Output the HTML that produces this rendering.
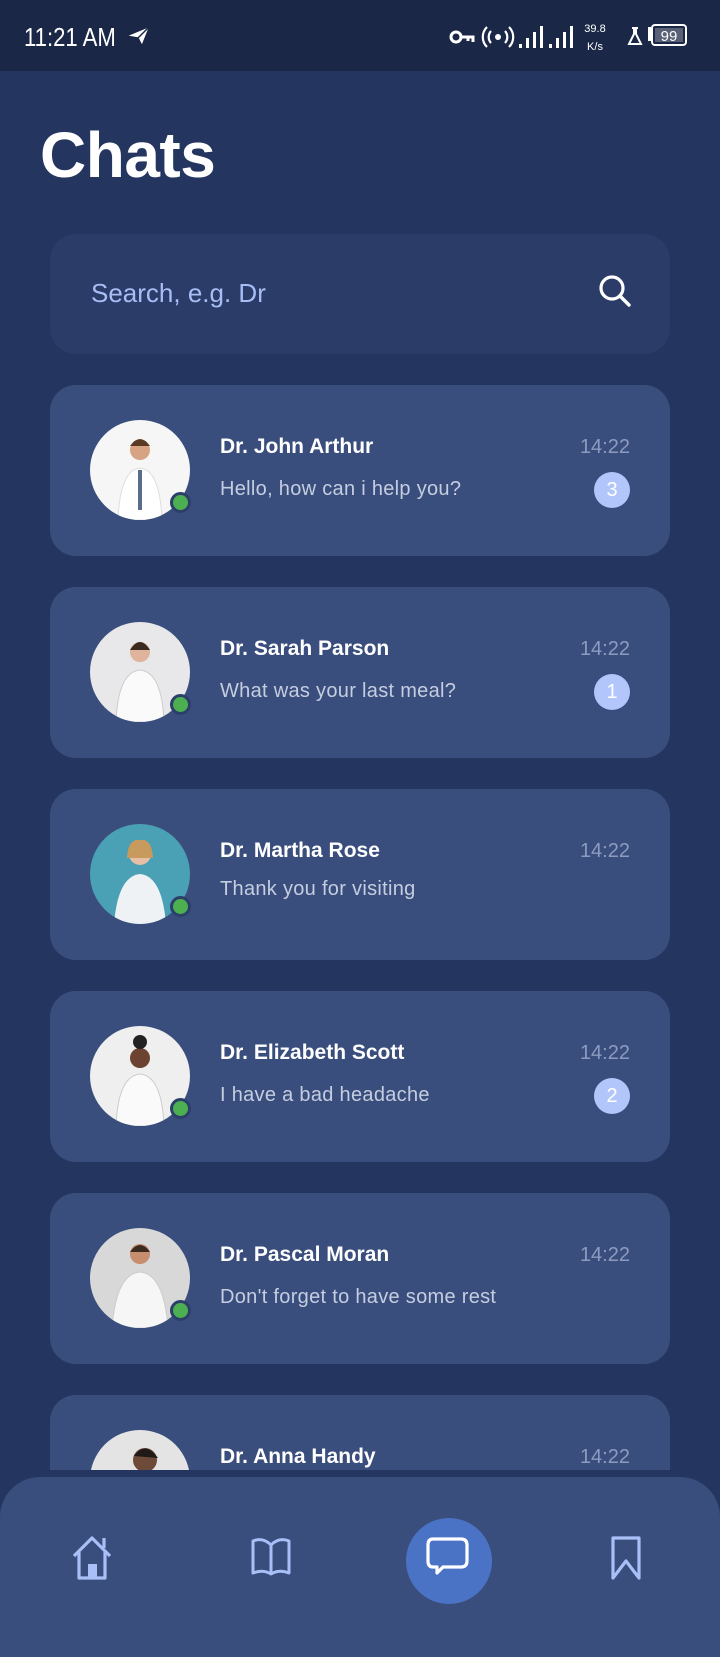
<!DOCTYPE html>
<html><head><meta charset="utf-8"><style>
*{margin:0;padding:0;box-sizing:border-box}
body{width:720px;height:1640px;background:#243660;font-family:"Liberation Sans",sans-serif;position:relative;overflow:hidden}
.sb{position:absolute;left:0;top:0;width:720px;height:71px;background:#1b2747;color:#fff}
.title{position:absolute;left:40px;top:118px;font-size:64px;font-weight:bold;color:#fff;letter-spacing:-0.5px}
.search{position:absolute;left:50px;top:234px;width:620px;height:120px;background:#2b3c68;border-radius:26px}
.search span{position:absolute;left:41px;top:44px;font-size:26px;color:#a8bdf5}
.card{position:absolute;left:50px;width:620px;height:171px;background:#3a4e7d;border-radius:26px;overflow:hidden}
.av{position:absolute;left:40px;top:35px;width:100px;height:100px;border-radius:50%;overflow:hidden;background:#ececec}
.dot{position:absolute;left:120px;top:107px;width:21px;height:21px;border-radius:50%;background:#4caf50;border:3px solid #2c3f6a}
.name{position:absolute;left:170px;top:50px;font-size:21px;font-weight:bold;color:#fff}
.msg{position:absolute;left:170px;top:93px;font-size:20px;color:#c5cde0;letter-spacing:.3px}
.time{position:absolute;right:40px;top:51px;font-size:20px;color:#8d9bc0}
.badge{position:absolute;right:40px;top:87px;width:36px;height:36px;border-radius:50%;background:#b3c6fb;color:#fff;font-size:20px;text-align:center;line-height:36px}
.nav{position:absolute;left:0;top:1477px;width:720px;height:180px;background:#3a4e7d;border-radius:40px 40px 0 0}
</style></head><body>
<div class="sb">
<div style="position:absolute;left:24px;top:22px;font-size:26px;transform:scaleX(.85);transform-origin:left">11:21 AM</div>
<svg style="position:absolute;left:124px;top:24px" width="28" height="24" viewBox="0 0 28 24"><path d="M2 12 L26 2 L18 22 L14 14 Z M14 14 L26 2" fill="#fff" stroke="#1b2747" stroke-width="1.5"/></svg>
<svg style="position:absolute;left:448px;top:22px" width="240" height="34" viewBox="0 0 240 34">
<circle cx="8" cy="15" r="5" fill="none" stroke="#fff" stroke-width="3"/><path d="M13 15h12v5M20 15v4" stroke="#fff" stroke-width="3" fill="none"/>
<circle cx="50" cy="15" r="3" fill="#fff"/><path d="M43 9a9 9 0 0 0 0 12M57 9a9 9 0 0 1 0 12M39 5a14 14 0 0 0 0 20M61 5a14 14 0 0 1 0 20" stroke="#fff" stroke-width="2.2" fill="none"/>
<rect x="71" y="22" width="3" height="4" fill="#fff"/><rect x="78" y="16" width="3" height="10" fill="#fff"/><rect x="85" y="10" width="3" height="16" fill="#fff"/><rect x="92" y="4" width="3" height="22" fill="#fff"/>
<rect x="101" y="22" width="3" height="4" fill="#fff"/><rect x="108" y="16" width="3" height="10" fill="#fff"/><rect x="115" y="10" width="3" height="16" fill="#fff"/><rect x="122" y="4" width="3" height="22" fill="#fff"/>
<text x="147" y="10" font-size="11" fill="#fff" text-anchor="middle" font-family="Liberation Sans">39.8</text><text x="147" y="28" font-size="11" fill="#fff" text-anchor="middle" font-family="Liberation Sans">K/s</text>
<path d="M184 6h6M186 6v6l-5 10h12l-5-10V6" stroke="#fff" stroke-width="2" fill="none"/>
<rect x="200" y="5" width="3" height="14" fill="#fff"/><rect x="204" y="3" width="34" height="20" rx="3" fill="none" stroke="#fff" stroke-width="2"/><rect x="207" y="6" width="28" height="14" fill="#5a6075"/>
<text x="221" y="19" font-size="15" fill="#fff" text-anchor="middle" font-family="Liberation Sans">99</text></svg>
</div>
<div class="title">Chats</div>
<div class="search"><span>Search, e.g. Dr</span>
<svg style="position:absolute;left:546px;top:38px" width="40" height="40" viewBox="0 0 40 40"><circle cx="16" cy="16" r="11" fill="none" stroke="#fff" stroke-width="3.2"/><path d="M24 24l9 9" stroke="#fff" stroke-width="3.4" stroke-linecap="round"/></svg></div>

<div class="card" style="top:385px"><div class="av" style="background:#f6f6f6"><svg width="100" height="100"><path d="M28 100 Q30 50 50 48 Q70 50 72 100Z" fill="#fff" stroke="#ddd"/><path d="M48 50h4v40h-4z" fill="#5a6c8c"/><circle cx="50" cy="30" r="10" fill="#d7a483"/><path d="M40 26 Q50 12 60 26" fill="#5a3a22"/></svg></div><div class="dot"></div><div class="name">Dr. John Arthur</div><div class="msg">Hello, how can i help you?</div><div class="time">14:22</div><div class="badge">3</div></div>

<div class="card" style="top:587px"><div class="av" style="background:#e8e8ea"><svg width="100" height="100"><path d="M26 100 Q28 50 50 48 Q72 50 74 100Z" fill="#fafafa" stroke="#ccc"/><circle cx="50" cy="30" r="10" fill="#e0b49a"/><path d="M40 28 Q50 12 60 28" fill="#3b2a20"/></svg></div><div class="dot"></div><div class="name">Dr. Sarah Parson</div><div class="msg">What was your last meal?</div><div class="time">14:22</div><div class="badge">1</div></div>

<div class="card" style="top:789px"><div class="av" style="background:#4aa0b4"><svg width="100" height="100"><path d="M24 100 Q28 52 50 50 Q72 52 76 100Z" fill="#eef2f5"/><circle cx="50" cy="30" r="11" fill="#e6bfa5"/><path d="M37 34 Q38 14 50 16 Q62 14 63 34" fill="#c79a5e"/></svg></div><div class="dot"></div><div class="name">Dr. Martha Rose</div><div class="msg" style="top:89px">Thank you for visiting</div><div class="time">14:22</div></div>

<div class="card" style="top:991px"><div class="av" style="background:#efefef"><svg width="100" height="100"><path d="M26 100 Q28 50 50 48 Q72 50 74 100Z" fill="#fafafa" stroke="#ccc"/><circle cx="50" cy="32" r="10" fill="#6b4330"/><circle cx="50" cy="16" r="7" fill="#222"/></svg></div><div class="dot"></div><div class="name">Dr. Elizabeth Scott</div><div class="msg">I have a bad headache</div><div class="time">14:22</div><div class="badge">2</div></div>

<div class="card" style="top:1193px"><div class="av" style="background:#d8d8d8"><svg width="100" height="100"><path d="M22 100 Q26 46 50 44 Q74 46 78 100Z" fill="#f6f6f6" stroke="#ccc"/><circle cx="50" cy="26" r="10" fill="#c68d6e"/><path d="M40 24 Q50 10 60 24" fill="#3a2a20"/></svg></div><div class="dot"></div><div class="name">Dr. Pascal Moran</div><div class="msg">Don't forget to have some rest</div><div class="time">14:22</div></div>

<div class="card" style="top:1395px;height:75px;border-radius:26px 26px 0 0"><div class="av" style="background:#e4e4e4"><svg width="100" height="100"><circle cx="55" cy="30" r="12" fill="#6e4a38"/><path d="M44 26 Q55 10 68 28" fill="#1f1a18"/></svg></div><div class="name">Dr. Anna Handy</div><div class="time">14:22</div></div>

<div class="nav">
<svg style="position:absolute;left:70px;top:57px" width="46" height="46" viewBox="0 0 46 46"><path d="M4 22 L22 4 L40 22 M9 18 V44 H35 V18 M34 14 V4" fill="none" stroke="#a9bff7" stroke-width="3.2" stroke-linejoin="round"/><rect x="18" y="30" width="9" height="14" fill="#a9bff7"/></svg>
<svg style="position:absolute;left:249px;top:60px" width="44" height="40" viewBox="0 0 44 40"><path d="M22 8 Q14 0 4 4 V36 Q14 32 22 37 Q30 32 40 36 V4 Q30 0 22 8 Z M22 8 V37" fill="none" stroke="#a9bff7" stroke-width="3" stroke-linejoin="round"/></svg>
<div style="position:absolute;left:406px;top:41px;width:86px;height:86px;border-radius:50%;background:#4a73c6"></div>
<svg style="position:absolute;left:425px;top:60px" width="48" height="48" viewBox="0 0 48 48"><path d="M8 2 H36 Q42 2 42 8 V24 Q42 30 36 30 H18 L12 36 V30 H8 Q3 30 3 24 V8 Q3 2 8 2 Z" fill="none" stroke="#fff" stroke-width="3.2" stroke-linejoin="round"/></svg>
<svg style="position:absolute;left:610px;top:58px" width="32" height="46" viewBox="0 0 32 46"><path d="M3 3 H29 V43 L16 26 L3 43 Z" fill="none" stroke="#a9bff7" stroke-width="3.2" stroke-linejoin="round"/></svg>
</div>
</body></html>
